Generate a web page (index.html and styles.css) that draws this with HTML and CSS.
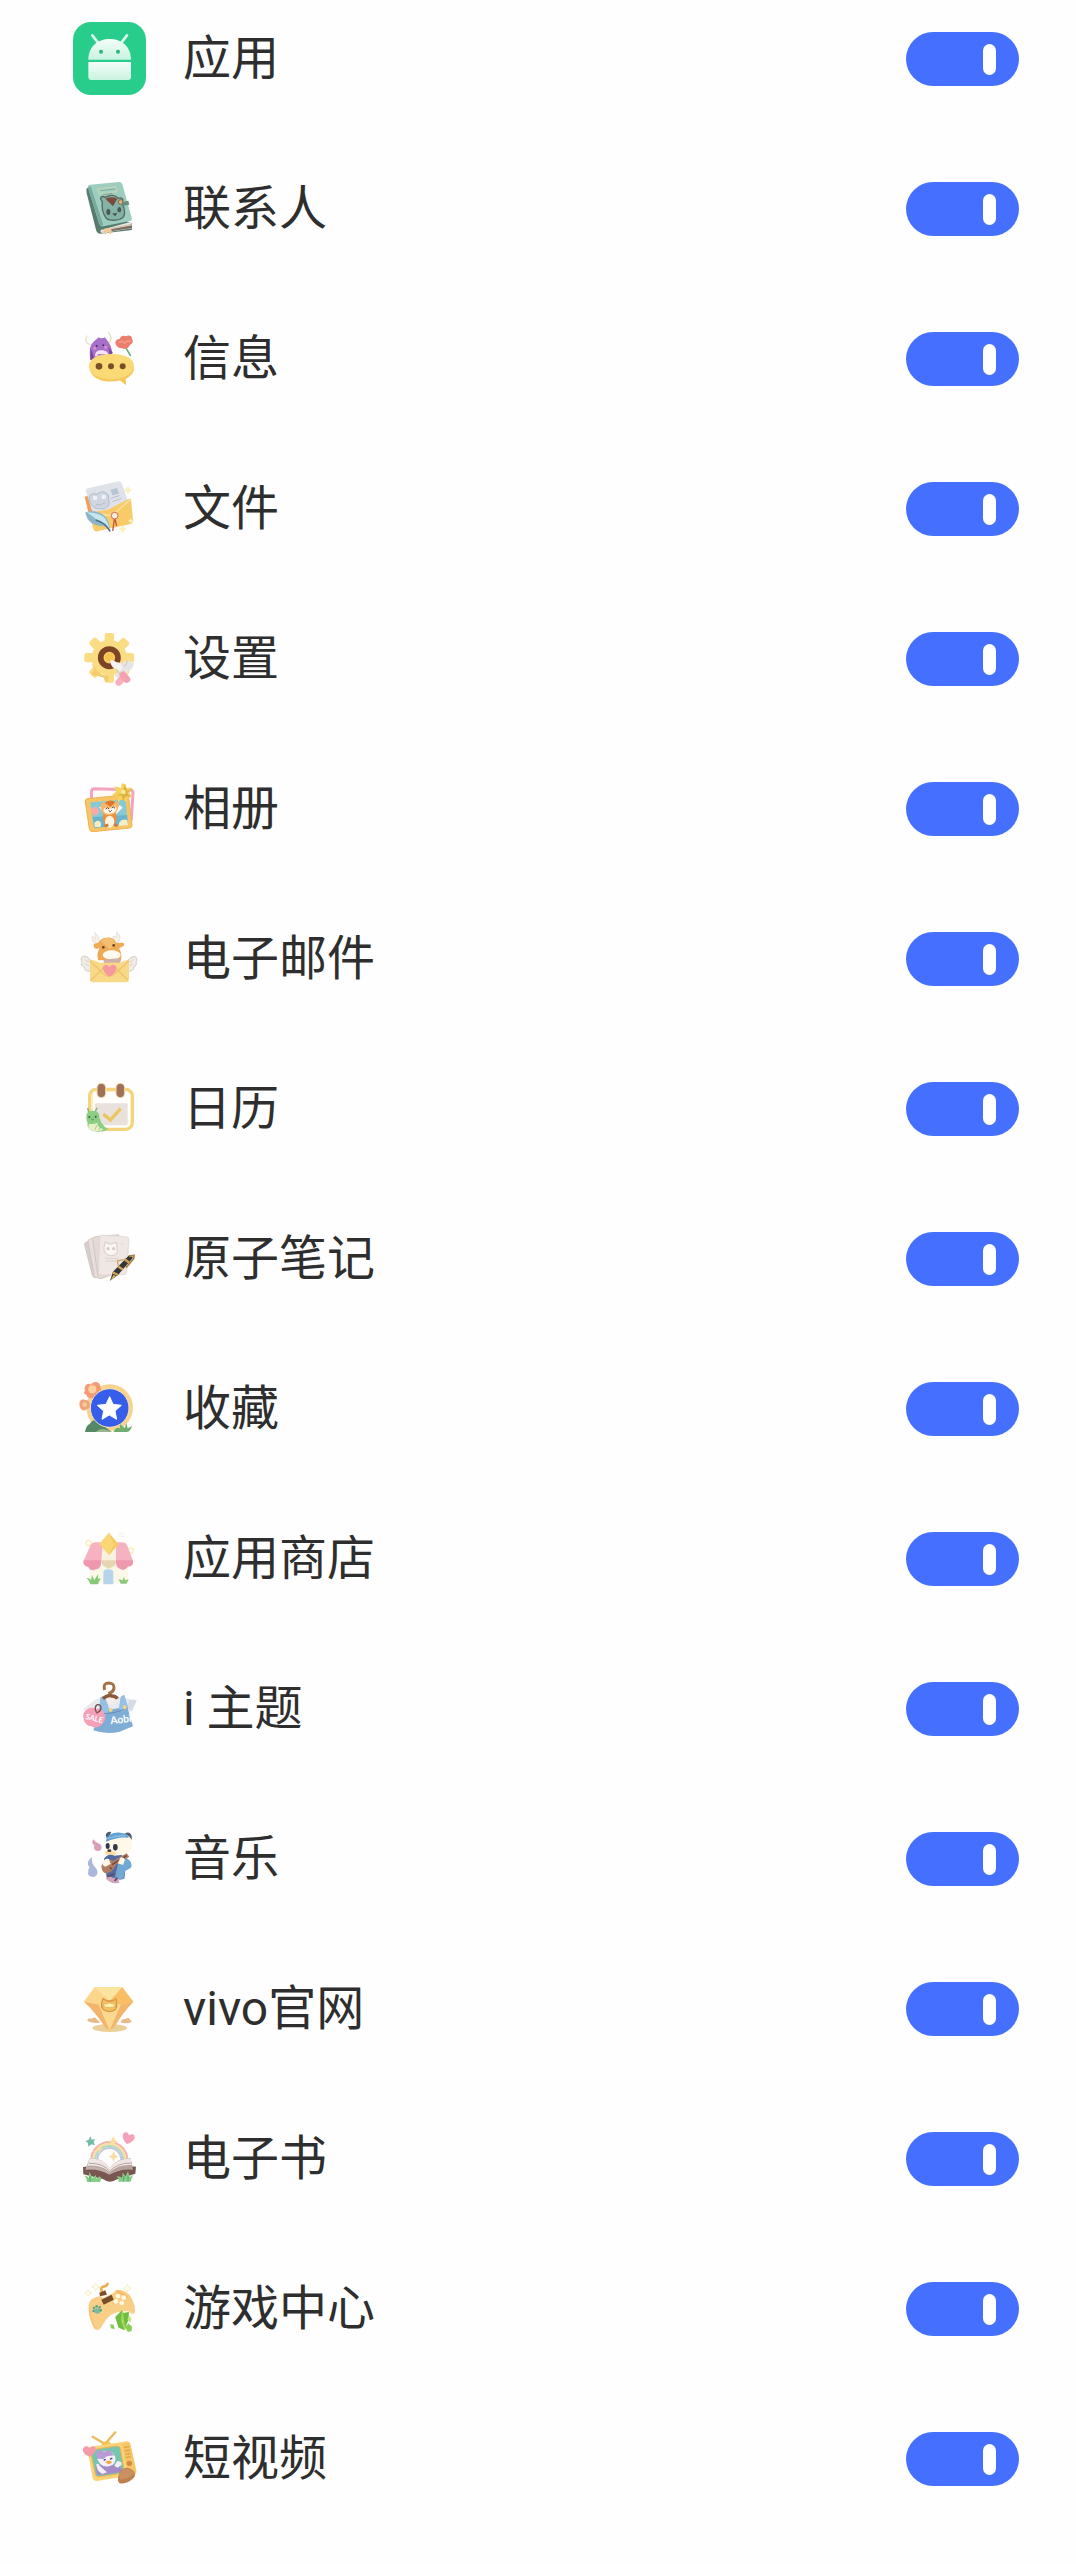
FILE: index.html
```html
<!DOCTYPE html>
<html lang="zh-CN">
<head>
    <meta charset="UTF-8">
    <meta name="viewport" content="width=device-width, initial-scale=1.0">
    <title>应用</title>
    <link rel="stylesheet" href="styles.css">
</head>
<body>
    <ul class="app-list">
        <li class="app-row">
            <svg class="app-icon" viewBox="39 36 222 222" aria-hidden="true">
                <defs>
                    <linearGradient id="robot" x1="0" y1="0" x2="0" y2="1">
                        <stop offset="0" stop-color="#f4fdf9"/>
                        <stop offset="1" stop-color="#c9f3e0"/>
                    </linearGradient>
                </defs>
                <rect x="39" y="36" width="219" height="219" rx="54" fill="#28cc8b"/>
                <path d="M97 76l17 22M201 76l-17 22" stroke="#d9f7ea" stroke-width="8" stroke-linecap="round"/>
                <path d="M85 149c0-38 27-62 64-62s64 24 64 62z" fill="url(#robot)"/>
                <path d="M85 156h128v45q0 9-9 9H94q-9 0-9-9z" fill="url(#robot)"/>
                <circle cx="123" cy="125" r="6" fill="#28b680"/>
                <circle cx="174" cy="125" r="6" fill="#28b680"/>
            </svg>
            <label class="app-name" for="app-1">应用</label>
            <input class="switch" type="checkbox" id="app-1" checked>
        </li>
        <li class="app-row">
            <svg class="app-icon" viewBox="39 486 222 222" aria-hidden="true">
                <path d="M79 538l9-10 97 100 31 12v20l-96 11q-8 0-11-8L80 550z" fill="#587b70"/>
                <path d="M122 660l92-25 2 20-88 14q-8 0-6-9z" fill="#eee9df"/>
                <path d="M128 660l86-17M128 666l87-13" stroke="#b9aa99" stroke-width="2"/>
                <path d="M152 658l64-12v8l-60 9z" fill="#7d6b61"/>
                <path d="M84 533q-2-8 7-9l85-8q8-1 11 7l28 100q2 8-6 10l-78 16q-10 3-13-6z" fill="#9ccdbe"/>
                <path d="M84 533l8-4 38 116-9 4z" fill="#78a99c"/>
                <path d="M112 536l55-6 5 15-55 8z" fill="#a8d3c3" stroke="#d9d3a6" stroke-width="2"/>
                <path d="M121 542l46-5M130 554l27-4" stroke="#77aa9c" stroke-width="3"/>
                <path d="M127 575c-11-12-1-19 9-13 14-9 31-7 39 3 14-5 17 7 9 13 12 17 15 44-3 49-15 6-38 5-44-5-9-12-12-31-10-47z" fill="#83b3a6" stroke="#56685c" stroke-width="4"/>
                <path d="M136 566q19-8 36 0l-13 23z" fill="#7b4c3e"/>
                <ellipse cx="145" cy="606" rx="6" ry="9" fill="#4c5752"/>
                <ellipse cx="178" cy="599" rx="6" ry="8" fill="#4c5752"/>
                <path d="M156 611l16-3-6 11z" fill="#4c5752"/>
                <path d="M185 577l20-5 3 12-21 4z" fill="#668f82"/>
                <circle cx="182" cy="576" r="7" fill="#d8b580" stroke="#8d6747" stroke-width="3"/>
                <path d="M132 656l22-3-1 21-9-8-10 9z" fill="#f5ca98"/>
            </svg>
            <label class="app-name" for="app-2">联系人</label>
            <input class="switch" type="checkbox" id="app-2" checked>
        </li>
        <li class="app-row">
            <svg class="app-icon" viewBox="39 36 222 222" aria-hidden="true">
                <path d="M92 104c-16-3-18-16-11-27M143 101c13-7 13-24 1-34" fill="none" stroke="#eadcc8" stroke-width="4"/>
                <path d="M91 150c-3-25-2-40 6-50 6-8 13-12 19-18 6 4 14 3 18 0 10 12 19 22 22 42l2 6-18 14z" fill="#a66fc9"/>
                <path d="M91 150l1-37 11 34zM146 112l12 16-9 8z" fill="#74479c"/>
                <path d="M105 139c0-13 6-18 20-18s19 7 21 16z" fill="#f1e4f3"/>
                <path d="M113 140v-8h22v8z" fill="#b57bd2"/>
                <circle cx="110" cy="108" r="3" fill="#483060"/><circle cx="130" cy="106" r="3" fill="#483060"/>
                <circle cx="104" cy="115" r="5" fill="#df8cc5"/><circle cx="137" cy="112" r="5" fill="#df8cc5"/>
                <path d="M199 116l12 20" stroke="#69ae76" stroke-width="5" stroke-linecap="round"/>
                <path d="M166 97c2-10 10-11 14-10 0-11 14-11 18-8 7-5 18-2 18 7 6 7 0 17-6 18-4 11-17 16-24 10-8 2-19-4-20-17z" fill="#ed7d6c"/>
                <path d="M176 98q11-8 18 2 8-11 18-5" fill="none" stroke="#f5a18a" stroke-width="4"/>
                <path d="M87 169c0-26 31-38 70-37 40 1 65 13 65 37 0 17-10 27-25 35l1 21-18-14c-45 11-92-3-93-42z" fill="#fada77"/>
                <path d="M95 189c20 22 77 25 103 10 12-7 20-17 23-29 3 17-8 28-24 36l1 19-18-14c-38 7-74 1-85-22z" fill="#f6c65a"/>
                <circle cx="117" cy="169" r="10" fill="#774e25"/><circle cx="153" cy="169" r="9" fill="#774e25"/><circle cx="188" cy="169" r="9" fill="#774e25"/>
            </svg>
            <label class="app-name" for="app-3">信息</label>
            <input class="switch" type="checkbox" id="app-3" checked>
        </li>
        <li class="app-row">
            <svg class="app-icon" viewBox="39 486 222 222" aria-hidden="true">
                <path d="M74 560l110-34 19 48-115 45z" fill="#ef9c5c"/>
                <path d="M78 545q-2-8 6-10l91-21q7-1 10 5l25 72-108 30z" fill="#dfe3e9"/>
                <path d="M151 539l20-5 6 17-20 5z" fill="#b7c4d8"/>
                <path d="M92 580c-13-20 2-35 18-27 19-16 39-4 36 16 6 15-4 28-18 27-17 3-31-3-36-16z" fill="#cfd6e2" stroke="#b3bccc" stroke-width="3"/>
                <circle cx="105" cy="564" r="7" fill="#eef1f5"/><circle cx="131" cy="561" r="7" fill="#eef1f5"/>
                <path d="M107 584q16 5 28-6M153 565l25-8M157 575l28-10" stroke="#b7bdc8" stroke-width="3" fill="none"/>
                <path d="M88 607l55-8 63-32q6-3 7 4l6 58q1 10-8 13l-99 22q-9 2-12-7z" fill="#f9ca68"/>
                <path d="M88 607l59 9q10 1 18-7l45-40" fill="none" stroke="#fde097" stroke-width="5"/>
                <path d="M164 623l-6 40M165 627l5 21" stroke="#c95241" stroke-width="4"/>
                <circle cx="164" cy="617" r="10" fill="#f5eee3" stroke="#d36a4f" stroke-width="3"/>
                <path d="M76 607c13-6 43-6 59 12 13 15 14 32 17 48-8-11-14-16-22-19-28 0-49-10-54-41z" fill="#8db5c9"/>
                <path d="M80 607c22 2 43 4 55 18 8 10 12 23 15 34-27-16-45-37-70-52z" fill="#c6e6ed"/>
                <path d="M107 630q29 8 43 34" fill="none" stroke="#476b88" stroke-width="4"/>
                <path d="M204 530l4 7 6 3-6 4-4 7-4-7-6-4 6-3zM188 647l4 7 6 3-6 4-4 7-4-7-6-4 6-3zM212 624l3 6 5 2-5 3-3 6-3-6-5-3 5-2z" fill="#fbf1bb" stroke="#eee38e" stroke-width="1"/>
            </svg>
            <label class="app-name" for="app-4">文件</label>
            <input class="switch" type="checkbox" id="app-4" checked>
        </li>
        <li class="app-row">
            <svg class="app-icon" viewBox="39 36 222 222" aria-hidden="true">
                <g fill="#fadc82">
                    <circle cx="148" cy="143" r="53"/>
                    <rect x="134" y="69" width="28" height="149" rx="6"/>
                    <rect x="134" y="69" width="28" height="149" rx="6" transform="rotate(45 148 143)"/>
                    <rect x="134" y="69" width="28" height="149" rx="6" transform="rotate(90 148 143)"/>
                    <rect x="134" y="69" width="28" height="149" rx="6" transform="rotate(135 148 143)"/>
                </g>
                <path d="M97 159q13 37 49 39l-3 18q-10 0-10-13-14-2-23-8-7 6-17-4l11-12q-9-10-7-20z" fill="#f4ca6b"/>
                <circle cx="148" cy="143" r="26" fill="#f7cf68" stroke="#7b4425" stroke-width="17"/>
                <circle cx="149" cy="142" r="13" fill="#f6c34f"/>
                <path d="M151 156q-1-8 8-5l11 6q15 1 15 8l18 22-14 11-19-22q-14 1-19-20z" fill="#f4f3f2"/>
                <path d="M186 177c-2-14 3-23 10-26l3 9 9-12 3 12 9-5c4 16-10 29-21 29l-23 22-14-9z" fill="#e6e4e4"/>
                <path d="M168 177l14 17M203 153l-9 17" stroke="#c9c9ca" stroke-width="3"/>
                <rect x="176" y="184" width="20" height="37" rx="10" fill="#f9aebb" transform="rotate(45 174 202)"/>
                <rect x="184" y="180" width="21" height="38" rx="10" fill="#f4a1b3" transform="rotate(-40 198 200)"/>
            </svg>
            <label class="app-name" for="app-5">设置</label>
            <input class="switch" type="checkbox" id="app-5" checked>
        </li>
        <li class="app-row">
            <svg class="app-icon" viewBox="39 486 222 222" aria-hidden="true">
                <path d="M104 536l105 3q10 1 10 10l-5 78-117-8-3-72q0-11 10-11z" fill="#fffaf8" stroke="#f2a3bd" stroke-width="9"/>
                <path d="M81 566l114-11q9-1 11 8l10 82q1 8-7 9l-110 11q-9 1-11-8l-12-81q-1-9 5-10z" fill="#f7c568" stroke="#efb451" stroke-width="3"/>
                <path d="M91 577l99-8q6 0 7 6l7 67-98 10q-5 0-6-6z" fill="#84cbd7"/>
                <path d="M98 621l103-6 3 29-101 10z" fill="#68b5cd"/>
                <path d="M103 638q11-12 20 0l-1 13h-18zM177 638q10-14 25-7l2 15-28 2z" fill="#f6edc5"/>
                <path d="M93 605q-3-12 8-11 8-9 12 2 8 7 0 16-11 11-20-7z" fill="#fba9a5"/>
                <path d="M132 610l-15-18 11-3 15 20zM164 606l15-21 9 8-20 20z" fill="#fff4e7"/>
                <ellipse cx="149" cy="622" rx="21" ry="29" fill="#e89142"/>
                <ellipse cx="149" cy="635" rx="14" ry="18" fill="#fff2de"/>
                <path d="M123 596c-3-14 3-22 11-17 8-7 23-8 31-2 9-5 17 4 9 15-1 17-12 23-27 23-14 0-23-7-24-19z" fill="#f5b66b"/>
                <path d="M134 579q17-14 32-2l-14 13z" fill="#dd772c"/>
                <path d="M130 599q7-12 18-2 13-13 22-3c-1 12-11 17-23 17-10 0-16-5-17-12z" fill="#fff6ec"/>
                <path d="M137 597l6-4 4 4M155 594l6-3 4 4M146 602q5 6 9-1" fill="none" stroke="#684432" stroke-width="3"/>
                <path d="M134 649l11-5M163 642l9 7" stroke="#d7782e" stroke-width="8"/>
                <path d="M164 529l19 5 2-14 12 3 3 12 15-3-6 18 8 11-15 1-3 14-13-10-12 12-1-17-18-5 13-11z" fill="#f5d260"/>
                <path d="M188 548l6-23 8 18 16-8-16 15 11 12-16-3-8 15-4-18-16 2z" fill="#ddb23f"/>
                <circle cx="190" cy="546" r="7" fill="#f9e891"/>
            </svg>
            <label class="app-name" for="app-6">相册</label>
            <input class="switch" type="checkbox" id="app-6" checked>
        </li>
        <li class="app-row">
            <svg class="app-icon" viewBox="39 36 222 222" aria-hidden="true">
                <path d="M115 102q-22-2-18-23l9 7-1-18 10 12 7 20zM163 98l-4-20 10 4 2-17 9 13-1 12q-3 10-16 12z" fill="#f4f1e9" stroke="#ddd8cd" stroke-width="2"/>
                <path d="M91 184q-20 0-17-12-14-7-8-14-7-17 6-20 13 0 20 16zM203 184q19 0 18-12 12-7 7-14 8-14-5-19-12 0-20 15z" fill="#f0ede6" stroke="#d3cec2" stroke-width="3"/>
                <path d="M74 148l13 9M75 162l12 5M221 148l-11 9M220 162l-11 5" stroke="#cac5b9" stroke-width="2"/>
                <path d="M101 107q0-9 13-8 11-17 27-16 20-2 28 16l17-1q10 0 5 10l-14 7q11 20 5 36h-68q-5-25 5-36-19 4-18-8z" fill="#efaa56"/>
                <path d="M123 94q14-16 35-8l9 16-18 15z" fill="#f4bf70"/>
                <circle cx="130" cy="112" r="4" fill="#66402d"/><circle cx="161" cy="106" r="4" fill="#66402d"/>
                <ellipse cx="155" cy="135" rx="27" ry="14" fill="#fffaf0"/>
                <path d="M131 151q27-8 53-4l-4 12h-49z" fill="#cfb0a6"/>
                <path d="M91 148l31 10h56l29-10v59q0 10-11 10h-96q-10 0-10-10z" fill="#f8d987"/>
                <path d="M90 153l40 38q17 15 34 0l43-38M92 211l38-37M204 211l-37-37" fill="none" stroke="#eec36d" stroke-width="4"/>
                <path d="M148 200c-23-15-24-35-10-36q8 0 10 8 3-9 12-8c16 2 12 23-12 36z" fill="#f698a0"/>
            </svg>
            <label class="app-name" for="app-7">电子邮件</label>
            <input class="switch" type="checkbox" id="app-7" checked>
        </li>
        <li class="app-row">
            <svg class="app-icon" viewBox="39 486 222 222" aria-hidden="true">
                <rect x="89" y="538" width="128" height="120" rx="20" fill="#fffefa" stroke="#f4d47b" stroke-width="10"/>
                <rect x="105" y="580" width="98" height="66" rx="3" fill="#e9e2dc"/>
                <path d="M97 641V552q0-8 9-8h94" fill="none" stroke="#fbeaba" stroke-width="3"/>
                <rect x="111" y="520" width="26" height="43" rx="13" fill="#a17056" stroke="#eee1b8" stroke-width="3"/>
                <rect x="168" y="520" width="26" height="43" rx="13" fill="#a17056" stroke="#eee1b8" stroke-width="3"/>
                <path d="M130 612l21 18 31-34" fill="none" stroke="#edc45d" stroke-width="10"/>
                <path d="M86 607l-3-13M105 607l6-14" stroke="#76b675" stroke-width="4"/>
                <path d="M79 620c0-14 10-19 21-17 14-1 20 10 18 21 5 5 2 12 9 17q5 10 17 15c-9 13-49 11-57 0-6-7-5-14-4-18-3-5-4-10-4-18z" fill="#8bce83"/>
                <path d="M87 641q15 3 25-3 0 14 19 20-11 8-30 5-21-3-14-22z" fill="#e8efc6"/>
                <path d="M105 659l6-14M116 661l6-11" stroke="#83b976" stroke-width="2"/>
                <circle cx="88" cy="621" r="3" fill="#355c43"/><circle cx="107" cy="620" r="3" fill="#355c43"/>
                <path d="M94 627q4 5 7 0" fill="none" stroke="#355c43" stroke-width="2"/>
            </svg>
            <label class="app-name" for="app-8">日历</label>
            <input class="switch" type="checkbox" id="app-8" checked>
        </li>
        <li class="app-row">
            <svg class="app-icon" viewBox="39 36 222 222" aria-hidden="true">
                <path d="M74 106q-2-8 6-10l26-8 20 107-19 8q-8 1-10-7z" fill="#d8cecb" stroke="#c9bdb9" stroke-width="2"/>
                <path d="M84 95q-1-7 7-9l40-6 10 111-27 12q-9 3-11-6z" fill="#e8dfdc" stroke="#c9bdb9" stroke-width="2"/>
                <path d="M98 89q0-8 8-9l70-6 7 110-60 22q-8 2-9-6z" fill="#e3d9d5" stroke="#c8bab6" stroke-width="2"/>
                <path d="M119 82q0-6 8-7l69 5q11 1 11 8l-7 98q-1 8-9 8l-68 1q-9 0-8-8z" fill="#eee7e4" stroke="#dbd0cc" stroke-width="2"/>
                <path d="M132 112l4-16 15 7 19-6 1 18q6 21-19 22-22-3-20-25z" fill="#faf6f3" stroke="#d7ccc7" stroke-width="3"/>
                <circle cx="144" cy="116" r="5" fill="#d7ccc7"/><circle cx="161" cy="116" r="5" fill="#d7ccc7"/>
                <path d="M135 145l42 2M136 153l32 1M182 105l8-6" stroke="#ddd3ce" stroke-width="3"/>
                <path d="M150 212l9-27 49-50 11 8-45 52z" fill="#343536"/>
                <path d="M158 187l16 8M174 169l15 10M193 147l16 12" stroke="#cea254" stroke-width="7"/>
                <path d="M207 139l15-3-1 10-23 27" fill="none" stroke="#a9813e" stroke-width="5"/>
                <path d="M151 212l9-17 8 3z" fill="#d7b35b"/>
                <path d="M175 167l-3-14 18-4" fill="none" stroke="#cda358" stroke-width="4"/>
            </svg>
            <label class="app-name" for="app-9">原子笔记</label>
            <input class="switch" type="checkbox" id="app-9" checked>
        </li>
        <li class="app-row">
            <svg class="app-icon" viewBox="39 486 222 222" aria-hidden="true">
                <circle cx="149" cy="593" r="70" fill="#f7d38c"/>
                <path d="M75 543c-6-15 9-27 18-19 9-14 29-7 28 7 9 14 0 24-11 24-8 14-28 12-31-1-8-2-9-7-4-11z" fill="#f39b75"/>
                <circle cx="97" cy="538" r="12" fill="#fbd3a0"/>
                <path d="M60 573q8-9 15-3 14 0 14 13 4 12-9 15-9 8-17-1-8-10-3-24z" fill="#f2a17d"/>
                <circle cx="74" cy="584" r="7" fill="#f9c994"/>
                <path d="M75 666q3-19 14-24 10-18 22-8 17-6 24 16l20 16z" fill="#568767"/>
                <path d="M107 666q17-18 48 0z" fill="#97b78c"/>
                <path d="M160 666q10-19 21-10l-3-16 16 14 5-14 4 15 13-7q-5 18-17 18z" fill="#6dae6f"/>
                <circle cx="149" cy="594" r="58" fill="#365eeb" stroke="#f6e3bd" stroke-width="3"/>
                <path d="M149 560l10 23 25 3-19 17 5 25-22-13-22 13 5-25-19-17 26-3z" fill="#fff" stroke="#fff" stroke-width="3" stroke-linejoin="round"/>
            </svg>
            <label class="app-name" for="app-10">收藏</label>
            <input class="switch" type="checkbox" id="app-10" checked>
        </li>
        <li class="app-row">
            <svg class="app-icon" viewBox="39 36 222 222" aria-hidden="true">
                <path d="M88 165h116v53H88z" fill="#fcf8e8"/>
                <circle cx="86" cy="99" r="8" fill="none" stroke="#faecb2" stroke-width="4"/>
                <circle cx="185" cy="74" r="6" fill="none" stroke="#f3ead5" stroke-width="2"/>
                <circle cx="212" cy="122" r="8" fill="none" stroke="#faecb2" stroke-width="4"/>
                <path d="M92 105q4-8 14-8h24l-6 59c0 15-9 23-18 22-8 8-20 1-21-8-9 1-17-7-14-18z" fill="#f6b2c1"/>
                <path d="M165 97h20q13 0 17 10l17 45c2 12-6 20-15 17-4 10-16 13-23 7-7 0-14-9-13-18z" fill="#f6b2c1"/>
                <path d="M128 105h40v54q-1 12-12 12-9 9-18 0-12 0-12-12z" fill="#f9f2dc"/>
                <path d="M71 151h53q-1 25-17 27-13 5-22-8-17-1-14-19zM168 151h51q1 19-15 18-12 17-27 5-9-9-9-23z" fill="#ee98ae"/>
                <path d="M125 151h43q0 20-13 20-8 9-17 0-13-1-13-20z" fill="#e7d4b2"/>
                <path d="M146 68l29 34-28 34-29-34z" fill="#f9d777"/>
                <path d="M146 68l15 35-14 33 28-34z" fill="#f7ca62"/>
                <path d="M130 223v-35q0-10 15-10t15 10v35z" fill="#b6d5ed"/>
                <path d="M91 223q-7-18-12-18 9-3 14 6l3-16 7 15 11-17 1 15q4-4 8-1-7 4-9 16zM182 221q-2-9-7-12 9-2 12 3l5-12 3 11 11-3q-2 5-7 13z" fill="#87c978"/>
            </svg>
            <label class="app-name" for="app-11">应用商店</label>
            <input class="switch" type="checkbox" id="app-11" checked>
        </li>
        <li class="app-row">
            <svg class="app-icon" viewBox="39 486 222 222" aria-hidden="true">
                <path d="M69 598l38-30 24-6 45-1 54 9-15 34-51 8-82-4z" fill="#e9eaf0"/>
                <path d="M207 571l23 0-14 32-13-8z" fill="#d6dbe7"/>
                <path d="M121 563l-3 47-18 51q38 14 79 4l40-16-16-55-10-35-11 4-3 31-38 6-11-43z" fill="#7fadd6"/>
                <path d="M121 563l16-4 11 40-14 22-18-4zM183 559l10-5 12 39-15 10-14-5z" fill="#96c0e4"/>
                <path d="M121 611q48 1 81-18" fill="none" stroke="#648fba" stroke-width="3"/>
                <path d="M134 562q17-14 39-2l-7 23-22-1z" fill="#f3eee8"/>
                <path d="M134 540q-6-20 11-21 18 0 17 15-1 11-13 15l3 10" fill="none" stroke="#a37348" stroke-width="9"/>
                <path d="M129 566q14-13 26-8 13 0 17 8" fill="none" stroke="#8b5939" stroke-width="10"/>
                <circle cx="152" cy="600" r="6" fill="#f0d486"/><circle cx="194" cy="592" r="6" fill="#f0d486"/>
                <path d="M73 606q16-20 35-9 13-6 23 10 12 23-7 38-14 13-30 4-15-1-22-17-5-18 1-26z" fill="#f5a0b7"/>
                <path d="M109 606q-8-15 3-22 12-1 11 11-2 10-14 14" fill="none" stroke="#76504c" stroke-width="4"/>
                <text class="icon-text" x="75" y="626" font-size="23" transform="rotate(15 75 626)">SALE</text>
                <text class="icon-text" x="152" y="643" font-size="31" transform="rotate(-7 152 643)">Aobi</text>
            </svg>
            <label class="app-name" for="app-12">i 主题</label>
            <input class="switch" type="checkbox" id="app-12" checked>
        </li>
        <li class="app-row">
            <svg class="app-icon" viewBox="39 36 222 222" aria-hidden="true">
                <path d="M101 88q6 11 14 12 13 6 9 17-5 9-15 5-10-3-6-16-12-7-2-18z" fill="#dc9db9"/>
                <path d="M96 142q-3 20 11 31 9 12 3 22-5 8-16 5-13-2-9-17-1-8 4-10-14-19 7-31z" fill="#abb6dc"/>
                <path d="M137 75q5-13 17-9l-12 24zM194 71q14-8 20 4 6 15-8 22l-14-13z" fill="#535d72"/>
                <path d="M137 104q-1-34 40-34 39 0 40 35 0 17-19 29-16 10-40 5-20-2-25-16-1-9 4-19z" fill="#fff7e8"/>
                <path d="M139 88q9-23 42-20 21 2 26 15-36-4-69 13z" fill="#62a3d3"/>
                <path d="M144 85q21-7 53-8" fill="none" stroke="#8cc1e4" stroke-width="4"/>
                <ellipse cx="143" cy="108" rx="6" ry="9" fill="#31384b"/><ellipse cx="166" cy="112" rx="7" ry="10" fill="#31384b"/>
                <path d="M137 124q20-8 32 7-14 14-27 4-10-3-5-11z" fill="#f9dda1"/>
                <ellipse cx="148" cy="122" rx="6" ry="4" fill="#4c3940"/>
                <path d="M132 146q12-17 31-9l21-2 16 12-7 59q-16 6-53-4z" fill="#526aa5"/>
                <path d="M177 148q18-13 33 5 9 13 1 22l-16 8-5 24q-13 4-25-5z" fill="#71a9d4"/>
                <path d="M125 175q-3-20 15-20 11-10 18-2l42-23 8 10-40 24q-9 22-27 25-13 3-16-14z" fill="#b27c61"/>
                <path d="M156 164l44-27M149 172l7 6" stroke="#6d4a45" stroke-width="4"/>
                <path d="M131 153q5-9 16-6l5 15-16 8q-14-5-5-17zM181 143q9-4 14 7l-6 15-16-5z" fill="#fff6e8"/>
                <path d="M137 205q9-10 21-2l17 1 3 14q-25 7-41-13z" fill="#d2a7bd"/>
                <path d="M141 200l23-8M164 213l8-10" stroke="#674c69" stroke-width="6"/>
            </svg>
            <label class="app-name" for="app-13">音乐</label>
            <input class="switch" type="checkbox" id="app-13" checked>
        </li>
        <li class="app-row">
            <svg class="app-icon" viewBox="39 486 222 222" aria-hidden="true">
                <ellipse cx="149" cy="654" rx="52" ry="12" fill="#ebcf98"/>
                <path d="M82 633q1-12 13-7 9-8 17 3l8 9q-19 4-38-5zM181 637q6-13 15-9 9-9 15 2l5 5q-15 8-35 2z" fill="#e9b988"/>
                <path d="M105 531h81l34 44q-31 31-59 76-13 21-26 0-27-44-63-76z" fill="#f9ca78"/>
                <path d="M105 531l44 1-33 52-44-9zM149 532l37-1 34 44-39 9z" fill="#fde5a7"/>
                <path d="M105 531l44 43-33 10-44-9z" fill="#fad58a"/>
                <path d="M186 531l-37 43 33 10 38-9z" fill="#f8bd65"/>
                <path d="M105 531l44 43 37-43z" fill="#fbe3a0"/>
                <path d="M116 584l33 77-14-10q-27-44-63-76zM182 584l-33 77 14-10q27-46 57-76z" fill="#f2b56b"/>
                <path d="M116 584l33-10 33 10-33 77z" fill="#fcd991"/>
                <path d="M125 580l4-14 13 7h14l12-6 2 15q3 20-22 23-27-3-23-25z" fill="#f2c467" stroke="#dc963e" stroke-width="4"/>
                <path d="M131 583q17-9 34 0v7q-17 7-34 0z" fill="#fff0ae" stroke="#d99842" stroke-width="2"/>
            </svg>
            <label class="app-name" for="app-14">vivo官网</label>
            <input class="switch" type="checkbox" id="app-14" checked>
        </li>
        <li class="app-row">
            <svg class="app-icon" viewBox="39 36 222 222" aria-hidden="true">
                <g fill="none" stroke-width="6">
                    <path d="M94 150a54 54 0 0 1 108 0" stroke="#f2b3ae"/>
                    <path d="M100 150a48 48 0 0 1 96 0" stroke="#f9dfa0"/>
                    <path d="M106 150a42 42 0 0 1 84 0" stroke="#b3d8b7"/>
                    <path d="M112 150a36 36 0 0 1 72 0" stroke="#bfc6e8"/>
                </g>
                <path d="M91 78l4 11 10-2-4 9 4 10-11-3-9 7-1-11-8-6 10-3z" fill="#72baa5"/>
                <path d="M201 102c-18-16-15-36-3-35 7 0 9 7 9 10 5-6 14-6 16 0 5 12-9 20-22 25z" fill="#f6a1ba"/>
                <path d="M160 79l5 11 9 5-9 4-5 11-5-11-9-4 9-5zM161 122l4 12 11 6-11 5-4 11-5-11-10-5 10-6zM119 105l3 9 7 4-7 4-3 9-3-9-7-4 7-4z" fill="#f9dda2"/>
                <path d="M69 171l19-2 61 22 65-22 14 1-2 21-58 18q-20 13-38-1l-60-15z" fill="#79564f"/>
                <path d="M88 145q39-3 61 30l-1 19q-30-19-72-15z" fill="#c2b2ad"/>
                <path d="M212 145q-42-1-63 30v19q31-19 70-15z" fill="#b4a39d"/>
                <path d="M88 145q42 0 61 30 19-28 63-30l3 20q-41-2-66 22-23-24-66-20z" fill="#eee7e3"/>
                <path d="M87 160q43-1 62 24 22-25 65-25M84 170q43-3 65 19 25-22 67-19" fill="none" stroke="#b9a49f" stroke-width="3"/>
                <path d="M81 216q-1-14-8-19 10 0 13 7l2-18 10 19 9-10 3 12 8-8 7 6-5 11zM175 215q2-10-5-16 13 0 16 5l2-16 9 11 7-15 5 17 11-6q-6 10-8 20z" fill="#86cd85"/>
                <path d="M91 214l-2-16M190 214l2-17M204 214v-17" stroke="#55a970" stroke-width="3"/>
            </svg>
            <label class="app-name" for="app-15">电子书</label>
            <input class="switch" type="checkbox" id="app-15" checked>
        </li>
        <li class="app-row">
            <svg class="app-icon" viewBox="39 486 222 222" aria-hidden="true">
                <path d="M128 552l-4-13q-2-7 7-9l8-3 6-8" fill="none" stroke="#edae58" stroke-width="8"/>
                <path d="M118 548l18-7 5 13-21 5z" fill="#825028"/>
                <path d="M86 596q-3-23 15-32l20-6 9 6 31-16 9-9q32-1 45 26 13 25 9 44-8 7-18-5-30-2-52 10-18 12-30 38-8 14-21 4-16-28-17-60z" fill="#f9cf87"/>
                <path d="M91 599q2 38 19 58-8-1-16-24-10-25-5-44zM166 540q27 3 42 27-16-11-32-15z" fill="#f6bd68"/>
                <path d="M124 569l31-15 6 15-30 15z" fill="#774c26"/>
                <circle cx="174" cy="558" r="7" fill="#fff7df"/><circle cx="191" cy="563" r="7" fill="#fff7df"/>
                <circle cx="168" cy="574" r="7" fill="#fff7df"/><circle cx="185" cy="579" r="7" fill="#fff7df"/>
                <ellipse cx="112" cy="603" rx="9" ry="8" fill="#82b89f"/>
                <g fill="#57a58d">
                    <circle cx="102" cy="594" r="4"/><circle cx="110" cy="589" r="4"/><circle cx="119" cy="592" r="4"/><circle cx="122" cy="601" r="4"/><circle cx="101" cy="603" r="4"/>
                </g>
                <path d="M166 621l20-20 20 27-12 33-17-8z" fill="#a4da58"/>
                <path d="M186 601l-3 30 10 30-18-9-9-31zM189 610l18-5-1 23-11 24z" fill="#71bd43"/>
                <path d="M150 643l11 1 3 14-11-3zM195 653l10-13 11 10-1 13-11 3z" fill="#8ace56"/>
                <path d="M206 616l9 11-5 11-7-10z" fill="#c0e878"/>
                <path d="M107 520l5 7 7 4-7 3-5 8-5-8-7-3 7-4zM84 540l4 6 7 3-7 4-4 6-4-6-5-4 5-3zM202 524l4 7 8 4-8 4-4 7-5-7-7-4 7-4z" fill="#fffdf0" stroke="#f2e6ad" stroke-width="2"/>
            </svg>
            <label class="app-name" for="app-16">游戏中心</label>
            <input class="switch" type="checkbox" id="app-16" checked>
        </li>
        <li class="app-row">
            <svg class="app-icon" viewBox="39 66 222 222" aria-hidden="true">
                <path d="M98 110l37 22 31-35" fill="none" stroke="#e9bb60" stroke-width="7" stroke-linecap="round"/>
                <path d="M125 132q11-15 27-4l4 9-30 5z" fill="#f3c45a"/>
                <path d="M90 141l109-17q9-1 12 8l18 80q2 9-7 13l-111 18q-10 2-13-8l-15-84q-1-8 7-10z" fill="#f9d477"/>
                <path d="M210 130l18 80q2 9-7 13l-15 4-21-95 17-5q6-1 8 3z" fill="#f6c666"/>
                <path d="M99 149l70-11q10-1 12 7l11 66q1 8-8 9l-67 10q-9 1-11-7l-13-63q-1-9 6-11z" fill="#77c5af" stroke="#edb351" stroke-width="3"/>
                <path d="M107 197l23-4 39 2 18 11 4 9-76 11q-7-6-8-29z" fill="#a58ac8"/>
                <path d="M109 192q7-2 10 5l22 20-14 5q-18-8-18-30zM171 184q13-3 15 9l-13 10-10-5z" fill="#f4edf7"/>
                <path d="M112 177q-1-19 15-23 28-8 39 17 4 22-19 28-24 5-35-22z" fill="#f6f0fa"/>
                <path d="M108 160l11-10 13 5 15-6 16 17-22 3-11 8-18-1z" fill="#b79bd5"/>
                <path d="M131 181l6-3M150 178l7-4" stroke="#4e415f" stroke-width="4"/>
                <path d="M136 186q11-8 20 0-8 13-20 0z" fill="#f0a53e"/>
                <path d="M89 170c-20-6-26-24-15-30 8-4 14 1 14 7 2-8 13-12 18-5 6 9-4 21-17 28z" fill="#f59ba7"/>
                <path d="M192 143l15-3M194 153l15-3M196 163l15-3M198 173l14-3" stroke="#dda14b" stroke-width="4"/>
                <circle cx="208" cy="190" r="8" fill="#d48b3f"/>
                <path d="M174 242q-1-26 17-36 10-6 25 3 12 7 8 21-12 15-33 20-14 3-17-8z" fill="#bd8150"/>
                <path d="M178 222q12-23 34-13 9 5 10 14-14 14-41 16-5-5-3-17z" fill="#ca905f"/>
            </svg>
            <label class="app-name" for="app-17">短视频</label>
            <input class="switch" type="checkbox" id="app-17" checked>
        </li>
    </ul>
</body>
</html>
```
FILE: styles.css
```css
body {
    margin: 0;
    background-color: #fefefe;
    color: #2e2e2e;
    font-family: Roboto, "Noto Sans CJK SC", sans-serif;
}

.app-list {
    display: flex;
    flex-direction: column;
    gap: 76px;
    margin: 0;
    padding: 22px 57px 68px 73px;
    list-style: none;
}

.app-row {
    display: flex;
    align-items: center;
    height: 74px;
}

.app-icon {
    flex: none;
    width: 74px;
    height: 74px;
}

.app-name {
    flex: 1;
    margin-left: 36px;
    font-size: 48px;
    line-height: 74px;
    cursor: pointer;
}

/* Lettering on the clothes icon */
.icon-text {
    fill: #ffffff;
    font-family: Lato, sans-serif;
    font-weight: bold;
}

.switch {
    appearance: none;
    display: flex;
    align-items: center;
    justify-content: flex-end;
    flex: none;
    box-sizing: border-box;
    width: 113px;
    height: 54px;
    margin: 0;
    padding: 0 23px;
    border-radius: 27px;
    background-color: #c8ccd4;
    cursor: pointer;
}

/* Pill shaped knob */
.switch::before {
    content: "";
    width: 13px;
    height: 31px;
    border-radius: 7px;
    background-color: #ffffff;
}

.switch:checked {
    background-color: #456fff;
}

.switch:not(:checked) {
    justify-content: flex-start;
}
```
